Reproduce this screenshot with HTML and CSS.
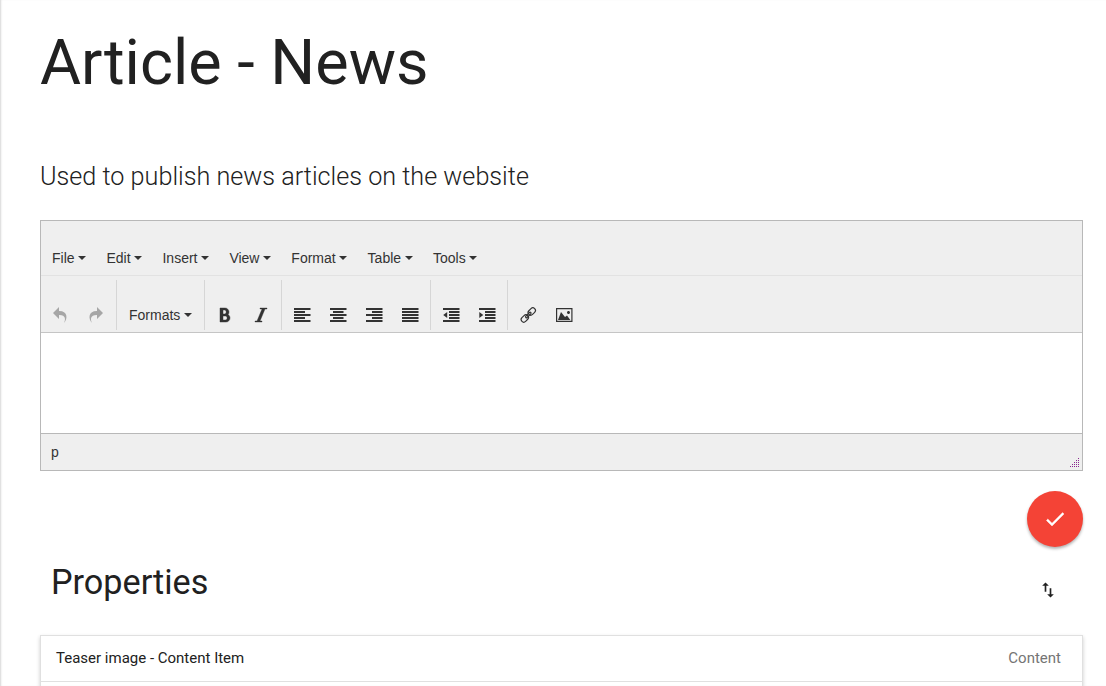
FILE: index.html
```
<!DOCTYPE html>
<html lang="en">
<head>
<meta charset="utf-8">
<title>Article - News</title>
<link rel="stylesheet" href="styles.css">
</head>
<body>
<main class="page">
  <h1 class="title">Article - News</h1>
  <p class="lead">Used to publish news articles on the website</p>

  <section class="editor">
    <nav class="menubar">
      <span class="menu">File</span>
      <span class="menu">Edit</span>
      <span class="menu">Insert</span>
      <span class="menu">View</span>
      <span class="menu">Format</span>
      <span class="menu">Table</span>
      <span class="menu">Tools</span>
    </nav>
    <div class="toolbar">
      <div class="group">
        <button class="tool disabled" aria-label="Undo"><svg viewBox="0 0 1024 1024"><path d="M761.862 1024c113.726-206.032 132.888-520.306-313.862-509.824v253.824l-384-384 384-384v248.372c534.962-13.942 594.57 472.214 313.862 775.628z"/></svg></button>
        <button class="tool disabled" aria-label="Redo"><svg viewBox="0 0 1024 1024"><path d="M576 248.372v-248.372l384 384-384 384v-253.824c-446.75-10.482-427.588 303.792-313.86 509.824-280.712-303.414-221.1-789.57 313.86-775.628z"/></svg></button>
      </div>
      <div class="group">
        <span class="menu formats">Formats</span>
      </div>
      <div class="group">
        <button class="tool" aria-label="Bold"><svg viewBox="0 0 1024 1024"><path stroke="currentColor" stroke-width="28" d="M707.88 484.652c37.498-44.542 60.12-102.008 60.12-164.652 0-141.16-114.842-256-256-256h-320v896h384c141.158 0 256-114.842 256-256 0-92.956-49.798-174.496-124.12-219.348zM384 192h101.5c55.968 0 101.5 57.42 101.5 128s-45.532 128-101.5 128h-101.5v-256zM543 832h-159v-256h159c58.45 0 106 57.42 106 128s-47.55 128-106 128z"/></svg></button>
        <button class="tool" aria-label="Italic"><svg viewBox="0 0 1024 1024"><path stroke="currentColor" stroke-width="24" d="M896 64v64h-128l-320 768h128v64h-448v-64h128l320-768h-128v-64z"/></svg></button>
      </div>
      <div class="group">
        <button class="tool" aria-label="Align left"><svg viewBox="0 0 16 16"><path d="M0 1h16.5v2H0zM0 4h11v2H0zM0 7h16.5v2H0zM0 10h11v2H0zM0 13h16.5v2H0z"/></svg></button>
        <button class="tool" aria-label="Align center"><svg viewBox="0 0 16 16"><path d="M0 1h16.5v2H0zM3 4h10.5v2H3zM0 7h16.5v2H0zM3 10h10.5v2H3zM0 13h16.5v2H0z"/></svg></button>
        <button class="tool" aria-label="Align right"><svg viewBox="0 0 16 16"><path d="M0 1h16.5v2H0zM6 4h10.5v2H6zM0 7h16.5v2H0zM6 10h10.5v2H6zM0 13h16.5v2H0z"/></svg></button>
        <button class="tool" aria-label="Justify"><svg viewBox="0 0 16 16"><path d="M0 1h16.5v2H0zM0 4h16.5v2H0zM0 7h16.5v2H0zM0 10h16.5v2H0zM0 13h16.5v2H0z"/></svg></button>
      </div>
      <div class="group">
        <button class="tool" aria-label="Decrease indent"><svg viewBox="0 0 16 16"><path d="M0 1h16.5v2H0zM6 4h10.5v2H6zM6 7h10.5v2H6zM6 10h10.5v2H6zM0 13h16.5v2H0zM4.2 5v6L.2 8z"/></svg></button>
        <button class="tool" aria-label="Increase indent"><svg viewBox="0 0 16 16"><path d="M0 1h16.5v2H0zM6 4h10.5v2H6zM6 7h10.5v2H6zM6 10h10.5v2H6zM0 13h16.5v2H0zM.3 11V5l4 3z"/></svg></button>
      </div>
      <div class="group">
        <button class="tool" aria-label="Link"><svg viewBox="0 0 16 16"><g transform="rotate(-45 8.3 8)" fill="none" stroke="currentColor" stroke-width="1.15"><rect x="-.7" y="5.4" width="8.2" height="5.2" rx="2.6"/><rect x="9.1" y="5.4" width="8.2" height="5.2" rx="2.6"/><rect x="4.8" y="7.1" width="7" height="1.8" rx=".9"/></g></svg></button>
        <button class="tool" aria-label="Image"><svg viewBox="0 0 1024 1024"><path d="M0 64v896h1056v-896h-1056zM980 884h-904v-744h904v744zM704 352c0 53.019 42.981 96 96 96s96-42.981 96-96-42.981-96-96-96-96 42.981-96 96zM916 832h-788l192-512 256 320 128-96z"/></svg></button>
      </div>
    </div>
    <div class="canvas"></div>
    <footer class="status">
      <span class="path">p</span>
      <svg class="grip" viewBox="0 0 9 9"><path d="M8 0h1v1H8zM6 2h1v1H6zM8 2h1v1H8zM4 4h1v1H4zM6 4h1v1H6zM8 4h1v1H8zM2 6h1v1H2zM4 6h1v1H4zM6 6h1v1H6zM8 6h1v1H8zM0 8h1v1H0zM2 8h1v1H2zM4 8h1v1H4zM6 8h1v1H6zM8 8h1v1H8z"/></svg>
    </footer>
  </section>

  <button class="save" aria-label="Save"><svg viewBox="0 0 24 24"><path stroke="currentColor" stroke-width=".4" d="M9 16.17L4.83 12l-1.42 1.41L9 19 21 7l-1.41-1.41z"/></svg></button>

  <header class="section-head">
    <h2 class="subtitle">Properties</h2>
    <svg class="sort" viewBox="0 0 24 24"><path d="M9 3L5 6.99h3V14h2V6.99h3L9 3zm7 14.01V10h-2v7.01h-3L15 21l4-3.99h-3z"/></svg>
  </header>

  <div class="list">
    <div class="item"><span>Teaser image - Content Item</span><span class="kind">Content</span></div>
  </div>
</main>
</body>
</html>
```
FILE: styles.css
```
* { box-sizing: border-box; }
body {
  margin: 0;
  height: 686px;
  overflow: hidden;
  background: #fff;
  color: #212121;
  font: 15px/1.5 Roboto, sans-serif;
}
button { border: 0; padding: 0; background: none; }
svg { display: block; overflow: visible; fill: currentColor; }
.page {
  height: 686px;
  padding: 28px 23px 0 40px;
  overflow: hidden;
  box-shadow: inset 2px 0 2px -1px rgba(0, 0, 0, .16);
}
.title {
  margin: 0;
  font-size: 63px;
  font-weight: 400;
  line-height: 69px;
}
.lead {
  margin: 62px 0 0;
  height: 36px;
  font-size: 25.2px;
  font-weight: 300;
  line-height: 36px;
}
.editor {
  margin-top: 25px;
  height: 251px;
  border: 1px solid #b8b8b8;
  background: #efefef;
  color: #333;
  font-family: "Liberation Sans", Arial, sans-serif;
  font-size: 14px;
}
.menubar {
  display: flex;
  gap: 20.4px;
  height: 55px;
  padding: 27px 11px 0;
  border-bottom: 1px solid #e2e2e2;
}
.menu {
  display: flex;
  align-items: center;
  gap: 3.5px;
  height: 20px;
  line-height: 20px;
}
.menu::after {
  content: "";
  border: 4px solid transparent;
  border-top-color: #333;
  border-bottom: 0;
}
.toolbar {
  display: flex;
  height: 57px;
  padding: 4px 0 2px 1px;
  border-bottom: 1px solid #c5c5c5;
}
.group {
  display: flex;
  height: 50px;
  padding: 27px 2px 0 0;
}
.group + .group { border-left: 1px solid #d6d6d6; padding-left: 2px; }
.formats { width: 83px; padding-left: 10px; height: 16px; }
.tool { width: 36px; height: 16px; color: #333; }
.tool svg { width: 16px; height: 16px; margin: 0 auto; }
.disabled { color: #a6a6a6; }
.canvas { height: 100px; background: #fff; }
.status {
  display: flex;
  justify-content: space-between;
  align-items: flex-end;
  height: 37px;
  padding: 0 3px 3px 10px;
  border-top: 1px solid #b8b8b8;
}
.path { line-height: 30px; }
.grip { width: 9px; height: 9px; color: #8b2890; }
.save {
  display: grid;
  place-items: center;
  width: 56px;
  height: 56px;
  margin: 20px 0 0 auto;
  border-radius: 50%;
  background: #f44336;
  color: #fff;
  box-shadow: 0 2px 3px rgba(0, 0, 0, .3);
}
.save svg { width: 24px; height: 24px; }
.section-head {
  display: flex;
  justify-content: space-between;
  height: 60px;
  margin-top: 15px;
  padding: 0 25px 0 11px;
}
.subtitle {
  margin: 0;
  font-size: 34.2px;
  font-weight: 400;
  line-height: 40px;
}
.sort { width: 20px; height: 20px; margin-top: 18px; }
.list {
  height: 51px;
  margin-top: 13px;
  border: 1px solid #e0e0e0;
  border-bottom: 0;
  box-shadow: 0 2px 4px rgba(0, 0, 0, .2);
}
.item {
  display: flex;
  justify-content: space-between;
  height: 46px;
  padding: 11px 21px 0 15px;
  border-bottom: 1px solid #e0e0e0;
  line-height: 23px;
}
.kind { color: #757575; }
```
